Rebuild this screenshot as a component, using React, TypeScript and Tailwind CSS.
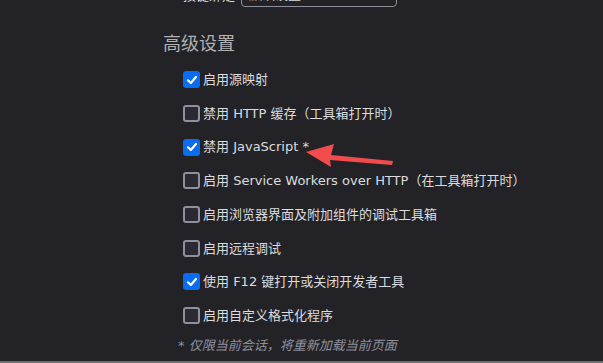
import React from 'react';

interface Option {
  label: string;
  checked: boolean;
}

const options: Option[] = [
  { label: '启用源映射', checked: true },
  { label: '禁用 HTTP 缓存（工具箱打开时）', checked: false },
  { label: '禁用 JavaScript *', checked: true },
  { label: '启用 Service Workers over HTTP（在工具箱打开时）', checked: false },
  { label: '启用浏览器界面及附加组件的调试工具箱', checked: false },
  { label: '启用远程调试', checked: false },
  { label: '使用 F12 键打开或关闭开发者工具', checked: true },
  { label: '启用自定义格式化程序', checked: false },
];

const CheckBox = ({ checked }: { checked: boolean }) =>
  checked ? (
    <span className="flex h-[17px] w-[17px] shrink-0 items-center justify-center rounded-[3px] bg-[#0a6cf0]">
      <svg width="12" height="12" viewBox="0 0 12 12" fill="none">
        <path d="M2 6.3 L4.8 9 L10 3" stroke="white" strokeWidth="2.2" strokeLinecap="round" strokeLinejoin="round" />
      </svg>
    </span>
  ) : (
    <span className="h-[17px] w-[17px] shrink-0 rounded-[3px] border-2 border-[#8f8f9d] bg-[#2b2a33]" />
  );

const App = () => {
  return (
    <div
      className="relative h-[363px] w-[603px] overflow-hidden border-b-2 border-[#6e6e72] bg-[#232327] text-[#dcdcdf]"
      style={{ fontFamily: '"DejaVu Sans", "Noto Sans CJK SC", sans-serif' }}
    >
      {/* keybinding row, mostly scrolled out of view */}
      <div className="-mt-[19px] ml-[183px] flex h-[26px] items-end gap-[6px] text-[13px] leading-[22px]">
        <span>按键绑定</span>
        <div className="flex h-[26px] w-[156px] items-end rounded-[4px] border border-[#8f8f9d] px-[7px]">
          默认设置
        </div>
      </div>

      <h2 className="ml-[163px] mt-[25px] text-[18px] leading-[24px] text-[#b1b1b3]">高级设置</h2>

      <ul className="ml-[183px] mt-[7px] flex flex-col">
        {options.map((o) => (
          <li key={o.label} className="flex h-[33.7px] items-center gap-[3px] text-[13px]">
            <CheckBox checked={o.checked} />
            <span>{o.label}</span>
          </li>
        ))}
      </ul>

      <p className="ml-[178px] mt-[3px] text-[13px] italic text-[#8f8f9d]">* 仅限当前会话，将重新加载当前页面</p>

      {/* annotation arrow */}
      <svg className="absolute left-0 top-0" width="603" height="363" viewBox="0 0 603 363">
        <polygon points="306,152 334,144 331,155 393,161 392,165 330,160 331,167" fill="#f24b4b" />
      </svg>
    </div>
  );
};

export default App;
